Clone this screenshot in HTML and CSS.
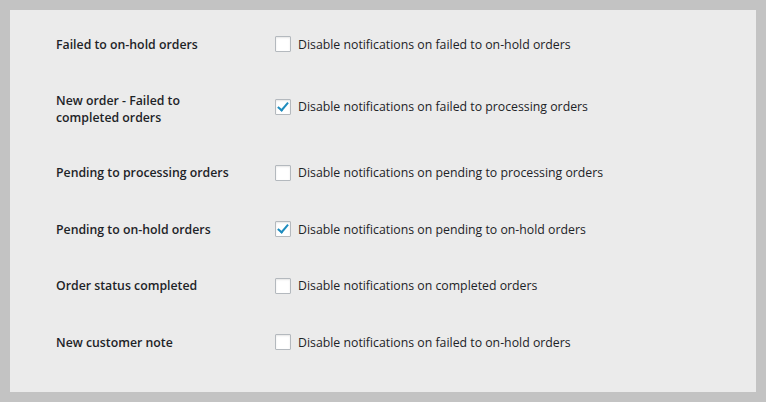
FILE: index.html
```html
<!DOCTYPE html>
<html lang="en">
  <head>
    <meta charset="UTF-8" />
    <meta name="viewport" content="width=device-width, initial-scale=1.0" />
    <title>Notification settings</title>
    <link rel="stylesheet" href="styles.css">
  </head>
  <body>
    <div class="panel">
      <!-- settings rows -->
      <div class="row">
        <div class="label">Failed to on-hold orders</div>
        <label class="field"><input type="checkbox"> Disable notifications on failed to on-hold orders</label>
      </div>
      <div class="row tall">
        <div class="label">New order - Failed to completed orders</div>
        <label class="field"><input type="checkbox" checked> Disable notifications on failed to processing orders</label>
      </div>
      <div class="row">
        <div class="label">Pending to processing orders</div>
        <label class="field"><input type="checkbox"> Disable notifications on pending to processing orders</label>
      </div>
      <div class="row">
        <div class="label">Pending to on-hold orders</div>
        <label class="field"><input type="checkbox" checked> Disable notifications on pending to on-hold orders</label>
      </div>
      <div class="row">
        <div class="label">Order status completed</div>
        <label class="field"><input type="checkbox"> Disable notifications on completed orders</label>
      </div>
      <div class="row">
        <div class="label">New customer note</div>
        <label class="field"><input type="checkbox"> Disable notifications on failed to on-hold orders</label>
      </div>
    </div>
  </body>
</html>
```

FILE: styles.css
```css
body {
  margin: 0;
  background-color: #c3c3c3;
  font-family: "Open Sans", "Noto Sans", Arial, sans-serif;
  font-size: 12.3px;
  color: #1d2327;
}

.panel {
  margin: 10px;
  height: 382px;
  box-sizing: border-box;
  background-color: #ebebeb;
  padding: 6px 0 0 46px;
}

.row {
  display: flex;
  align-items: center;
  height: 56.5px;
}

.row.tall {
  height: 72px;
}

.row.tall .field {
  margin-top: -4px;
}

.label {
  width: 180px;
  margin-right: 39px;
  font-weight: 600;
  line-height: 17px;
}

.field {
  display: flex;
  align-items: center;
}

input[type="checkbox"] {
  appearance: none;
  -webkit-appearance: none;
  width: 16px;
  height: 16px;
  margin: 0 7px 0 0;
  box-sizing: border-box;
  border: 1px solid #b4b9be;
  border-radius: 1px;
  background-color: #fff;
  box-shadow: inset 0 1px 2px rgba(0, 0, 0, 0.1);
  position: relative;
}

input[type="checkbox"]:checked::after {
  content: "";
  position: absolute;
  left: 4px;
  top: 0px;
  width: 4px;
  height: 9px;
  border: solid #1e8cbe;
  border-width: 0 2.5px 2.5px 0;
  transform: rotate(40deg);
}
```
